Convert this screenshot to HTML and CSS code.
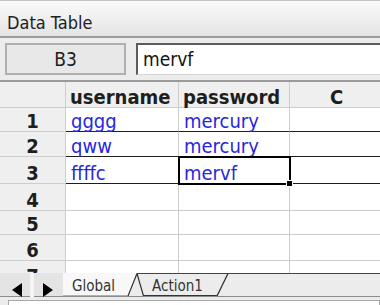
FILE: index.html
```html
<!DOCTYPE html>
<html lang="en">
<head>
  <meta charset="UTF-8" />
  <title>Data Table</title>
  <link rel="stylesheet" href="styles.css">
</head>
<body>
  <div class="titlebar">Data Table</div>

  <div class="formula-bar">
    <div class="name-box">B3</div>
    <div class="value-box">mervf</div>
  </div>

  <div class="sheet">
    <div class="cell corner"></div>
    <div class="cell col-head">username</div>
    <div class="cell col-head">password</div>
    <div class="cell col-head center">C</div>
    <div class="cell col-head"></div>

    <div class="cell row-head">1</div>
    <div class="cell data used">gggg</div>
    <div class="cell data used">mercury</div>
    <div class="cell data used"></div>
    <div class="cell data used"></div>

    <div class="cell row-head">2</div>
    <div class="cell data used">qww</div>
    <div class="cell data used">mercury</div>
    <div class="cell data used"></div>
    <div class="cell data used"></div>

    <div class="cell row-head">3</div>
    <div class="cell data used">ffffc</div>
    <div class="cell data used selected">mervf</div>
    <div class="cell data used"></div>
    <div class="cell data used"></div>

    <div class="cell row-head">4</div>
    <div class="cell data"></div>
    <div class="cell data"></div>
    <div class="cell data"></div>
    <div class="cell data"></div>

    <div class="cell row-head">5</div>
    <div class="cell data"></div>
    <div class="cell data"></div>
    <div class="cell data"></div>
    <div class="cell data"></div>

    <div class="cell row-head">6</div>
    <div class="cell data"></div>
    <div class="cell data"></div>
    <div class="cell data"></div>
    <div class="cell data"></div>

    <div class="cell row-head">7</div>
    <div class="cell data"></div>
    <div class="cell data"></div>
    <div class="cell data"></div>
    <div class="cell data"></div>
  </div>

  <div class="tabbar">
    <div class="tab-nav">
      <svg width="63" height="24" viewBox="0 0 63 24">
        <rect x="30" y="0" width="4" height="24" fill="#f4f4f4" />
        <polygon points="12,17 22,10 22,24" fill="#000" />
        <polygon points="53,17 43,10 43,24" fill="#000" />
      </svg>
    </div>
    <div class="tabs">
      <svg class="tab-shapes" width="317" height="24" viewBox="0 0 317 24">
        <polygon points="0,0 74,0 65,23 0,23" fill="#f8f8f8" />
        <line x1="0" y1="22.5" x2="65" y2="22.5" stroke="#b0b0b0" />
        <line x1="74" y1="0.5" x2="317" y2="0.5" stroke="#444" stroke-width="1.2" />
        <line x1="80" y1="22.5" x2="154" y2="22.5" stroke="#333" stroke-width="1.2" />
        <line x1="74" y1="0.5" x2="80.5" y2="23" stroke="#333" stroke-width="1.2" />
        <line x1="65" y1="23" x2="74" y2="0.5" stroke="#333" stroke-width="1.2" />
        <line x1="154" y1="23" x2="165" y2="0.5" stroke="#333" stroke-width="1.3" />
      </svg>
      <span class="tab">Global</span>
      <span class="tab">Action1</span>
    </div>
  </div>

  <div class="statusbar">
    <div class="status-field"></div>
  </div>
</body>
</html>
```

FILE: styles.css
```css
body {
  margin: 0;
  width: 380px;
  height: 305px;
  overflow: hidden;
  background-color: #ececec;
  font-family: "DejaVu Sans Condensed", "DejaVu Sans", sans-serif;
  color: #1e1e1e;
}

.titlebar {
  height: 24px;
  padding: 11px 0 0 7px;
  line-height: 21px;
  font-size: 18px;
  color: #222;
  border-top: 1px solid #c4c4c4;
  border-bottom: 2px solid #9c9c9c;
  background: linear-gradient(#fafafa, #e4e4e4);
}

.formula-bar {
  display: flex;
  align-items: center;
  gap: 10px;
  height: 42px;
  padding-left: 5px;
  border-bottom: 2px solid #9a9a9a;
  background-color: #ececec;
}

.name-box {
  width: 117px;
  height: 26px;
  padding-top: 2px;
  line-height: 24px;
  text-align: center;
  font-size: 19px;
  border: 2px solid #b0b0b0;
  background-color: #e8e8e8;
}

.value-box {
  flex: 1;
  height: 27px;
  padding: 2px 0 0 5px;
  line-height: 24px;
  font-size: 19px;
  color: #111;
  background-color: #fff;
  border-top: 2px solid #5c5c5c;
  border-left: 2px solid #5c5c5c;
  border-bottom: 1px solid #d4d4d4;
}

.sheet {
  display: grid;
  grid-template-columns: 66px 113px 111px 94px 1fr;
  grid-template-rows: 26px 24px 25px 27px 27px 24px 26px 26px;
  height: 191px;
  overflow: hidden;
  background-color: #fff;
}

.cell {
  display: flex;
  align-items: flex-end;
  padding-left: 5px;
  line-height: 20px;
  font-size: 20px;
  white-space: nowrap;
  border-right: 1px solid #cdcdcd;
  border-bottom: 1px solid #cdcdcd;
}

.corner,
.col-head,
.row-head {
  background-color: #efefef;
}

.col-head {
  font-weight: bold;
  padding-left: 4px;
}

.center,
.row-head {
  justify-content: center;
  padding-left: 0;
}

.row-head {
  font-weight: bold;
}

.data {
  color: #2727dd;
}

.used {
  border-bottom-color: #1e1e1e;
}

.selected {
  position: relative;
  outline: 2px solid #000;
  outline-offset: -1px;
}

.selected::after {
  content: "";
  position: absolute;
  right: -4px;
  bottom: -4px;
  width: 5px;
  height: 5px;
  background-color: #000;
  border: 1px solid #fff;
}

.tabbar {
  display: flex;
  height: 23px;
  border-bottom: 1px solid #8c8c8c;
  background-color: #ececec;
}

.tab-nav {
  width: 63px;
  background-color: #e4e4e4;
}

.tab-nav svg {
  display: block;
}

.tabs {
  position: relative;
  flex: 1;
  display: flex;
}

.tab-shapes {
  position: absolute;
  left: 0;
  top: 0;
}

.tab {
  position: relative;
  width: 71px;
  padding: 3px 0 0 9px;
  line-height: 20px;
  font-size: 15px;
  color: #333;
}

.statusbar {
  height: 5px;
  padding: 3px 0 0 8px;
  background-color: #ececec;
}

.status-field {
  height: 8px;
  border: 1px solid #a8a8a8;
  background-color: #fff;
}
```
